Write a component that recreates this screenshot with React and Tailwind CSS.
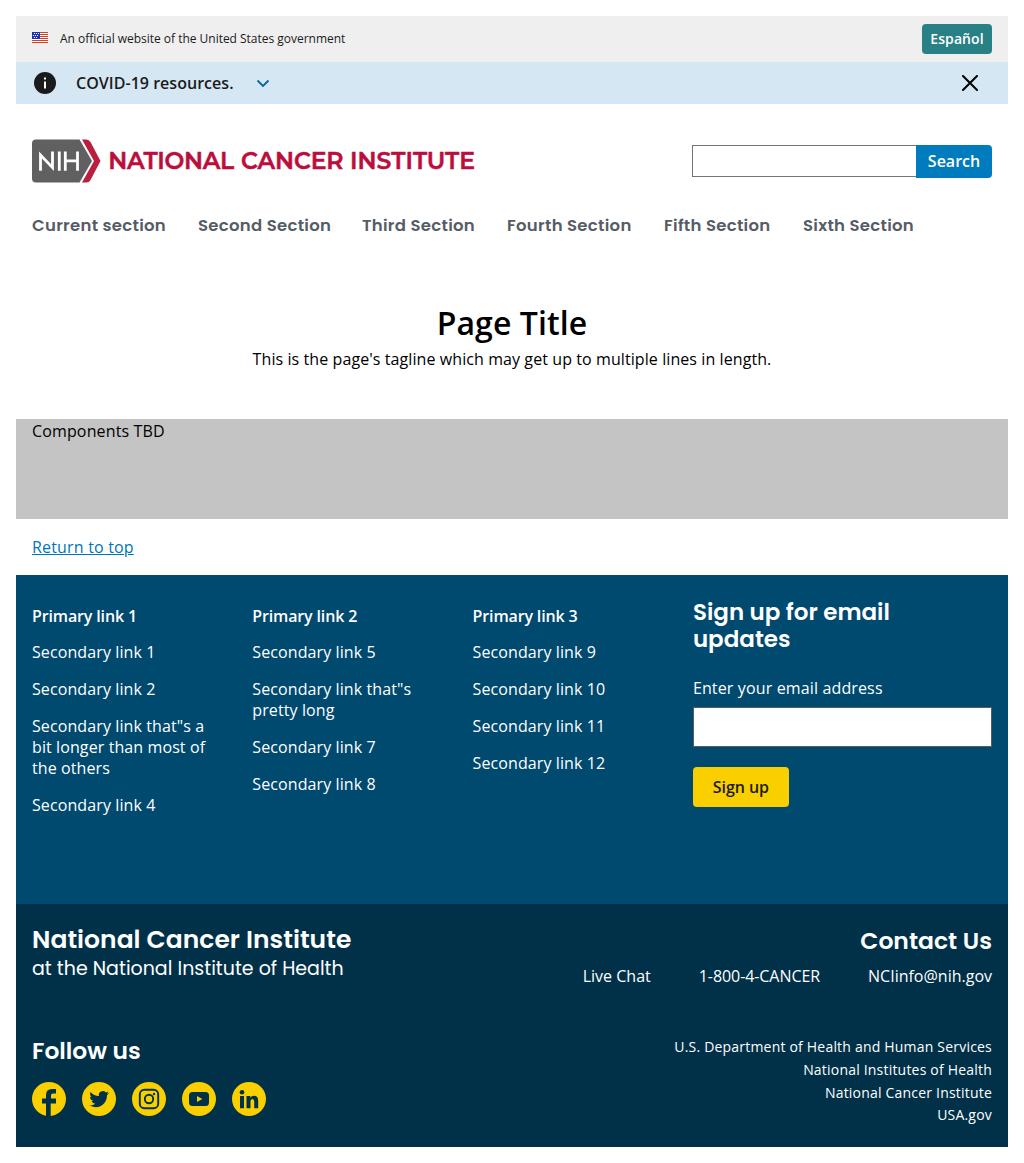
import React from "react";

const heading = "font-['Poppins','Inter',sans-serif]";

const navItems = [
  ["Current section", "w-[134px]"],
  ["Second Section", "w-[132px]"],
  ["Third Section", "w-[113px]"],
  ["Fourth Section", "w-[125px]"],
  ["Fifth Section", "w-[107px]"],
  ["Sixth Section", "w-[110px]"],
];

const columns = [
  { title: "Primary link 1", links: ["Secondary link 1", "Secondary link 2", 'Secondary link that"s a bit longer than most of the others', "Secondary link 4"] },
  { title: "Primary link 2", links: ["Secondary link 5", 'Secondary link that"s pretty long', "Secondary link 7", "Secondary link 8"] },
  { title: "Primary link 3", links: ["Secondary link 9", "Secondary link 10", "Secondary link 11", "Secondary link 12"] },
];

function Flag() {
  return (
    <svg className="block" width="16" height="11" viewBox="0 0 16 11" shapeRendering="crispEdges" aria-hidden="true">
      <rect width="16" height="11" fill="#fff" />
      {[0, 2, 4, 6, 8, 10].map((y) => (
        <rect key={y} y={y} width="16" height="1" fill="#db3e1f" />
      ))}
      <rect width="8" height="7" fill="#1e33b1" />
      {[[2, 1], [4, 1], [6, 1], [1, 3], [3, 3], [5, 3], [2, 5], [4, 5]].map(([x, y]) => (
        <rect key={x + "-" + y} x={x} y={y} width="1" height="1" fill="#fff" />
      ))}
    </svg>
  );
}

function Logo() {
  return (
    <svg width="450" height="44" viewBox="0 -.6 450 44" role="img" aria-label="National Cancer Institute">
      <path d="M4 0H47.500L60 21.500L47.500 43H4Q0 43 0 39V4Q0 0 4 0Z" fill="#606060" />
      <path d="M50 0H54.500Q57 0 58.500 2.500L68.500 21.500L58.500 40.500Q57 43 54.500 43H50L62 21.500Z" fill="#bb1f3f" />
      <path d="M8.500 31.200V15.500L20.500 28V12M27.300 12V31.200M33.300 12V31.200M45.500 12V31.200M33.300 21.300H45.500" fill="none" stroke="#fff" strokeWidth="2.800" />
      <g fontFamily="Montserrat, Lato, sans-serif" fontSize="23.500" fontWeight="600" fill="#bb0e3d" stroke="#bb0e3d" strokeWidth=".5">
        <text x="76.300" y="29.200" textLength="125.800">NATIONAL</text>
        <text x="209" y="29.200" textLength="102.500">CANCER</text>
        <text x="318" y="29.200" textLength="125">INSTITUTE</text>
      </g>
    </svg>
  );
}

function Social({ name, children }) {
  return (
    <a href="#" aria-label={name}>
      <svg width="34" height="34" viewBox="0 0 34 34" className="block">
        <circle cx="17" cy="17" r="17" fill="#facf00" />
        {children}
      </svg>
    </a>
  );
}

export default function App() {
  return (
    <div className="h-[1163px] bg-white p-4 font-['Open_Sans','Noto_Sans',sans-serif] text-base text-black">
      <div className="flex h-[46px] items-center bg-[#efefef] px-4">
        <div className="mt-4 self-start"><Flag /></div>
        <span className="ml-3 text-xs tracking-[-0.02px] text-[#1b1b1b]">An official website of the United States government</span>
        <button className="ml-auto h-[30px] w-[70px] rounded bg-[#298085] text-sm font-semibold tracking-[0.1px] text-white">Español</button>
      </div>
      <div className="flex h-[42px] items-center bg-[#d5e7f3] px-4 text-[#1b1b1b]">
        <svg className="ml-px" width="24" height="24" viewBox="0 0 24 24">
          <circle cx="12" cy="12" r="11" fill="#1b1b1b" />
          <path d="M11 6.500h2v2h-2zM11 10.500h2v7h-2z" fill="#fff" />
        </svg>
        <span className="ml-[19px] w-[158px] font-semibold tracking-[0.03px]">COVID-19 resources.</span>
        <svg className="ml-[22px]" width="14" height="9" viewBox="0 0 14 9" fill="none" stroke="#0067a5" strokeWidth="1.800">
          <path d="M1.500 1.500L7 7L12.500 1.500" />
        </svg>
        <svg className="mr-3.5 ml-auto" width="16" height="16" viewBox="0 0 16 16" fill="none" stroke="#000" strokeWidth="2" strokeLinecap="round">
          <path d="M1 1L15 15M15 1L1 15" />
        </svg>
      </div>

      <header className="px-4 pt-[35px]">
        <div className="flex h-11 items-start justify-between">
          <Logo />
          <form className="mt-1.5 flex items-start">
            <input aria-label="Search" className="h-8 w-[225px] border border-[#71767a] bg-white" />
            <button type="button" className="-ml-px h-[33px] w-[76px] rounded-r bg-[#007bbd] pb-0.5 font-semibold text-white">Search</button>
          </form>
        </div>
        <nav className={`mt-[31px] flex gap-8 text-[16.500px] leading-6 font-semibold tracking-[0.28px] text-[#565c65] ${heading}`}>
          {navItems.map(([label, width]) => (
            <a key={label} href="#" className={`whitespace-nowrap ${width}`}>{label}</a>
          ))}
        </nav>
      </header>

      <main>
        <section className="pt-[66px] text-center">
          <h1 className="text-[32px] leading-[38px] font-semibold tracking-[0.1px]">Page Title</h1>
          <p className="mt-[5px] leading-6 tracking-[0.085px]">This is the page's tagline which may get up to multiple lines in length.</p>
        </section>
        <section className="mt-12 h-[100px] bg-[#c4c4c4] px-4 tracking-[0.14px]">Components TBD</section>
        <div className="flex h-14 items-center px-4">
          <a href="#" className="tracking-[0.18px] text-[#0076b6] underline">Return to top</a>
        </div>
      </main>

      <footer className="text-white">
        <div className="flex h-[329px] bg-[#00496f] px-4">
          {columns.map((col) => (
            <div key={col.title} className="w-[220.300px] pt-[31px] pr-8 leading-[21px]">
              <h3 className="font-semibold tracking-[-0.14px]">{col.title}</h3>
              <ul className="mt-[15px] flex flex-col gap-4 tracking-[0.1px]">
                {col.links.map((l) => (
                  <li key={l}><a href="#">{l}</a></li>
                ))}
              </ul>
            </div>
          ))}
          <div className="flex-1 pt-6">
            <h2 className={`text-[23px] leading-[27px] font-semibold ${heading}`}>Sign up for email<br />updates</h2>
            <label className="mt-[25px] block leading-5 tracking-[0.14px]" htmlFor="email">Enter your email address</label>
            <input id="email" className="mt-[9px] block h-10 w-full border border-[#565c65] bg-white" />
            <button className="mt-5 h-10 w-24 rounded bg-[#facf00] font-semibold tracking-[-0.05px] text-[#1b1b1b]">Sign up</button>
          </div>
        </div>
        <div className="flex h-[243px] justify-between bg-[#003149] px-4">
          <div className={heading}>
            <h2 className="mt-5 text-[25px] leading-8 font-semibold tracking-[0.03px]">National Cancer Institute</h2>
            <p className="mt-px text-[19px] leading-6">at the National Institute of Health</p>
            <h3 className="mt-14 text-[23.400px] leading-7 font-semibold">Follow us</h3>
            <div className="mt-[17px] flex gap-4">
              <Social name="Facebook">
                <path d="M14 34V21.500H10V16.500H14V13Q14 7 20 7H24V11.500H21Q19 11.500 19 13.500V16.500H24V21.500H18.700V34Z" fill="#003149" />
              </Social>
              <Social name="Twitter">
                <path transform="translate(7.300 7.300) scale(.82)" d="M23.953 4.570a10 10 0 01-2.825.775 4.958 4.958 0 002.163-2.723c-.951.555-2.005.959-3.127 1.184a4.920 4.920 0 00-8.384 4.482C7.690 8.095 4.067 6.130 1.640 3.162a4.822 4.822 0 00-.666 2.475c0 1.710.870 3.213 2.188 4.096a4.904 4.904 0 01-2.228-.616v.060a4.923 4.923 0 003.946 4.827 4.996 4.996 0 01-2.212.085 4.936 4.936 0 004.604 3.417 9.867 9.867 0 01-6.102 2.105c-.390 0-.779-.023-1.170-.067a13.995 13.995 0 007.557 2.209c9.053 0 13.998-7.496 13.998-13.985 0-.210 0-.420-.015-.630A9.935 9.935 0 0024 4.590z" fill="#003149" />
              </Social>
              <Social name="Instagram">
                <g fill="none" stroke="#003149" strokeWidth="1.900">
                  <rect x="7.800" y="7.800" width="18.400" height="18.400" rx="4.500" />
                  <circle cx="17" cy="17" r="4.200" />
                </g>
                <circle cx="22" cy="12" r="1.200" fill="#003149" />
              </Social>
              <Social name="YouTube">
                <rect x="7" y="10" width="20" height="14" rx="3.500" fill="#003149" />
                <path d="M15 14V20L20.300 17Z" fill="#facf00" />
              </Social>
              <Social name="LinkedIn">
                <path d="M8 14H12V26.300H8ZM14.500 14H18.300V15.700Q19.500 13.700 22 13.700Q26.200 13.700 26.200 18.500V26.300H22.200V19.500Q22.200 17 20.400 17Q18.500 17 18.500 19.500V26.300H14.500Z" fill="#003149" />
                <circle cx="10" cy="10.200" r="2.300" fill="#003149" />
              </Social>
            </div>
          </div>
          <div className="text-right">
            <h2 className={`mt-[23px] text-[23.500px] leading-7 font-semibold ${heading}`}>Contact Us</h2>
            <div className="mt-[9px] flex justify-end gap-12 leading-6">
              <a href="#">Live Chat</a>
              <a href="#" className="tracking-[-0.07px]">1-800-4-CANCER</a>
              <a href="#">NCIinfo@nih.gov</a>
            </div>
            <div className="mt-[48px] flex flex-col text-sm leading-[22.750px] tracking-[0.2px]">
              <a href="#">U.S. Department of Health and Human Services</a>
              <a href="#">National Institutes of Health</a>
              <a href="#">National Cancer Institute</a>
              <a href="#">USA.gov</a>
            </div>
          </div>
        </div>
      </footer>
    </div>
  );
}
